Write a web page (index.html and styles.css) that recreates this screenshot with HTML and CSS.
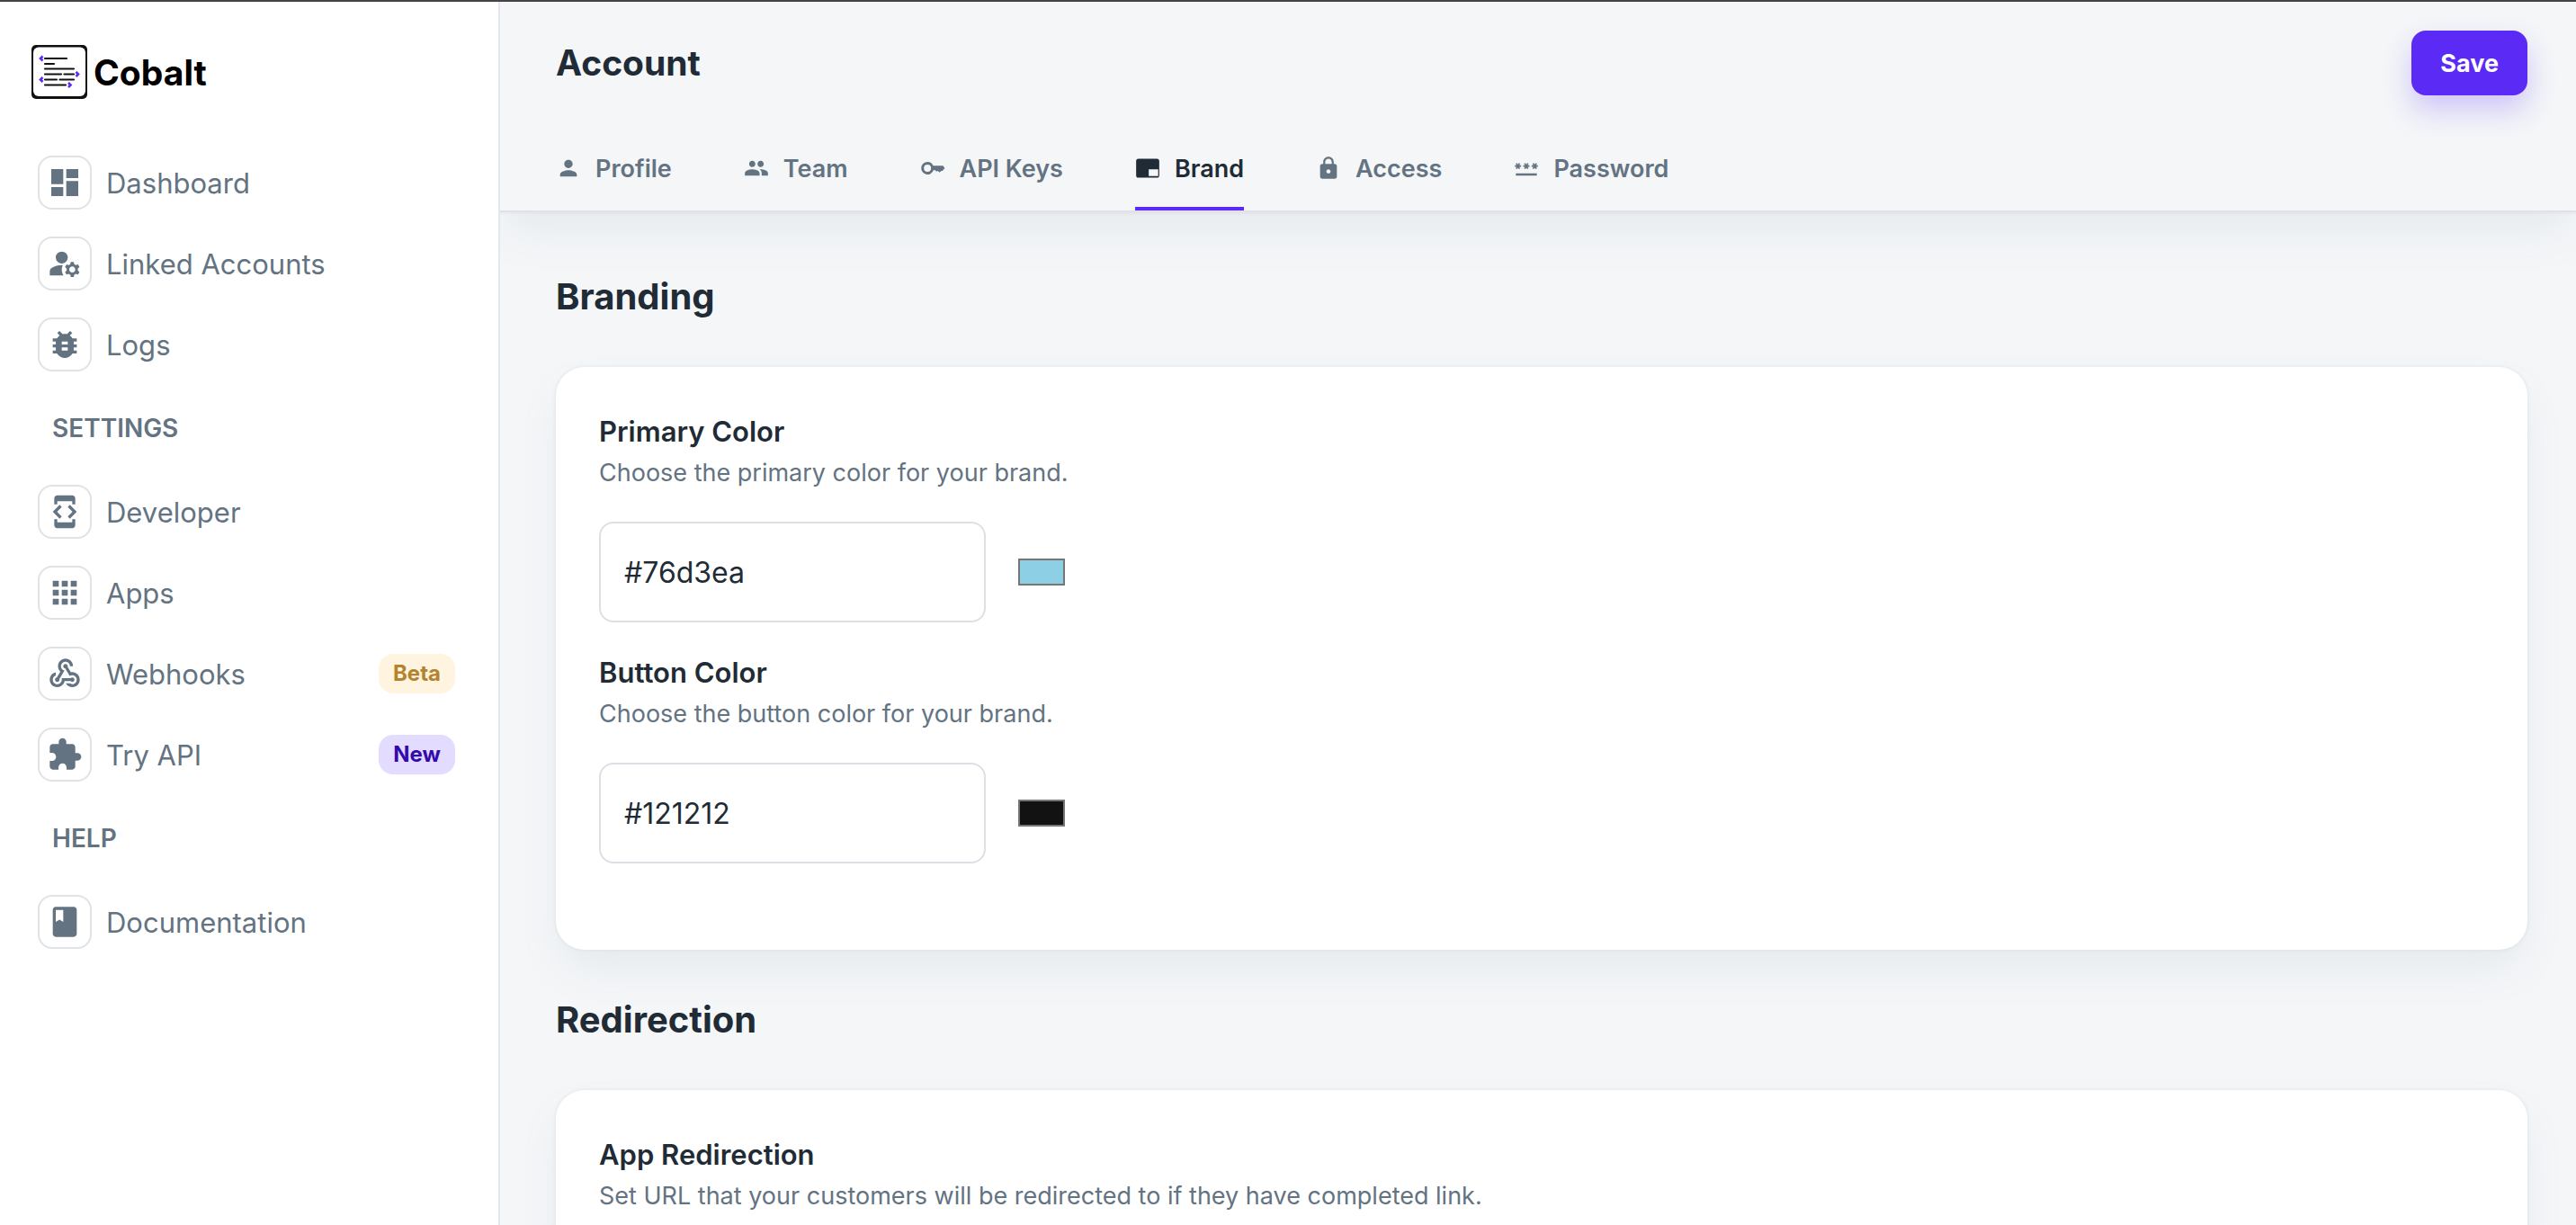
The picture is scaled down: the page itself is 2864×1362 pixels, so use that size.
FILE: index.html
```
<!DOCTYPE html>
<html lang="en">
<head>
<meta charset="utf-8">
<meta name="viewport" content="width=device-width, initial-scale=1">
<title>Cobalt</title>
<link rel="stylesheet" href="styles.css">
</head>
<body class="app">
<aside class="sidebar">
  <a class="logo" href="#">
    <svg class="logo-mark" viewBox="0 0 64 60" fill="none">
      <rect x="1" y="0" width="62" height="60" rx="5" fill="#111"/>
      <rect x="3" y="2.500" width="58" height="54.500" rx="6" fill="#fff"/>
      <path d="M16 15h24M16 21h10M16 26.500h32M16 32.500h18M37.500 32.500h10.500M16 38.500h13M32.500 38.500h15.500M16 44.500h23" stroke="#111" stroke-width="2.200" stroke-linecap="round"/>
      <path d="M13.500 12.500l-2.500 2.500 2.500 2.500M13.500 36l-2.500 2.500 2.500 2.500M50.500 30l2.500 2.500-2.500 2.500M42 42l2.500 2.500-2.500 2.500" stroke="#5b2bf5" stroke-width="2.600"/>
    </svg>
    <span>Cobalt</span>
  </a>
  <nav class="nav">
    <a class="nav-item" href="#"><span class="nav-icon"><svg viewBox="0 0 24 24"><path d="M3 13h8V3H3v10zm0 8h8v-6H3v6zm10 0h8V11h-8v10zm0-18v6h8V3h-8z"/></svg></span><span class="nav-text">Dashboard</span></a>
    <a class="nav-item" href="#"><span class="nav-icon"><svg viewBox="0 0 24 24"><circle cx="10" cy="8" r="4"/><path d="M10.670 13.020C10.450 13.010 10.230 13 10 13c-2.420 0-4.680.67-6.610 1.820-.88.520-1.390 1.500-1.390 2.530V20h9.260c-.79-1.130-1.260-2.510-1.260-4 0-1.070.25-2.070.67-2.980zM20.750 16c0-.22-.03-.42-.06-.63l1.140-1.010-1-1.730-1.450.49c-.32-.27-.68-.48-1.080-.63L18 11h-2l-.3 1.490c-.4.150-.76.360-1.080.63l-1.450-.49-1 1.730 1.140 1.010c-.03.210-.06.410-.06.630s.03.420.06.630l-1.140 1.010 1 1.730 1.450-.49c.32.270.68.480 1.080.63L16 21h2l.3-1.490c.4-.15.760-.36 1.080-.63l1.450.49 1-1.730-1.140-1.010c.03-.21.060-.41.060-.63zM17 18c-1.100 0-2-.9-2-2s.9-2 2-2 2 .9 2 2-.9 2-2 2z"/></svg></span><span class="nav-text">Linked Accounts</span></a>
    <a class="nav-item" href="#"><span class="nav-icon"><svg viewBox="0 0 24 24"><path d="M20 8h-2.810c-.45-.78-1.070-1.450-1.820-1.960L17 4.410 15.590 3l-2.170 2.170C12.960 5.060 12.490 5 12 5s-.96.060-1.410.17L8.410 3 7 4.410l1.620 1.630C7.880 6.550 7.260 7.220 6.810 8H4v2h2.090c-.05.33-.09.66-.09 1v1H4v2h2v1c0 .34.04.67.09 1H4v2h2.810c1.040 1.790 2.970 3 5.190 3s4.150-1.210 5.190-3H20v-2h-2.090c.05-.33.090-.66.090-1v-1h2v-2h-2v-1c0-.34-.04-.67-.09-1H20V8zm-6 8h-4v-2h4v2zm0-4h-4v-2h4v2z"/></svg></span><span class="nav-text">Logs</span></a>
    <h2 class="nav-heading">SETTINGS</h2>
    <a class="nav-item" href="#"><span class="nav-icon"><svg viewBox="0 0 24 24"><path d="M7 5h10v2h2V3c0-1.100-.9-1.990-2-1.990L7 1c-1.100 0-2 .9-2 2v4h2V5zm8.410 11.590L20 12l-4.590-4.590L14 8.830 17.170 12 14 15.170l1.410 1.420zM10 15.170L6.830 12 10 8.830 8.590 7.410 4 12l4.590 4.590L10 15.170zM17 19H7v-2H5v4c0 1.100.9 2 2 2h10c1.100 0 2-.9 2-2v-4h-2v2z"/></svg></span><span class="nav-text">Developer</span></a>
    <a class="nav-item" href="#"><span class="nav-icon"><svg viewBox="0 0 24 24"><path d="M4 8h4V4H4v4zm6 12h4v-4h-4v4zm-6 0h4v-4H4v4zm0-6h4v-4H4v4zm6 0h4v-4h-4v4zm6-10v4h4V4h-4zm-6 4h4V4h-4v4zm6 6h4v-4h-4v4zm0 6h4v-4h-4v4z"/></svg></span><span class="nav-text">Apps</span></a>
    <a class="nav-item" href="#"><span class="nav-icon"><svg viewBox="0 0 24 24"><path d="M10 15h5.880c.27-.31.670-.5 1.120-.5.830 0 1.500.67 1.500 1.500s-.67 1.500-1.500 1.500c-.44 0-.84-.19-1.120-.5H11.900c-.46 2.280-2.480 4-4.900 4-2.760 0-5-2.240-5-5 0-2.420 1.720-4.440 4-4.900v2.070c-1.160.41-2 1.530-2 2.830 0 1.650 1.350 3 3 3s3-1.350 3-3v-1zm2.500-11c1.650 0 3 1.350 3 3h2c0-2.760-2.240-5-5-5s-5 2.240-5 5c0 1.430.6 2.710 1.550 3.620l-2.350 3.900c-.68.140-1.200.75-1.200 1.480 0 .83.670 1.500 1.500 1.500s1.500-.67 1.500-1.500c0-.16-.02-.31-.07-.45l3.380-5.630C10.490 9.610 9.500 8.420 9.500 7c0-1.650 1.350-3 3-3zm4.500 9c-.64 0-1.230.2-1.720.54l-3.050-5.070C11.530 8.350 11 7.740 11 7c0-.83.670-1.500 1.500-1.500S14 6.170 14 7c0 .15-.02.29-.06.43l2.190 3.650c.28-.05.57-.08.870-.08 2.760 0 5 2.240 5 5s-2.240 5-5 5c-1.850 0-3.470-1.010-4.330-2.500h2.670c.48.320 1.050.5 1.660.5 1.650 0 3-1.350 3-3s-1.350-3-3-3z"/></svg></span><span class="nav-text">Webhooks</span><span class="badge badge-beta">Beta</span></a>
    <a class="nav-item" href="#"><span class="nav-icon"><svg viewBox="0 0 24 24"><path d="M20.500 11H19V7c0-1.100-.9-2-2-2h-4V3.500C13 2.120 11.880 1 10.500 1S8 2.120 8 3.500V5H4c-1.100 0-1.990.9-1.990 2v3.800H3.500c1.490 0 2.700 1.210 2.700 2.700s-1.210 2.700-2.700 2.700H2V20c0 1.100.9 2 2 2h3.800v-1.500c0-1.490 1.210-2.700 2.700-2.700 1.490 0 2.700 1.210 2.700 2.700V22H17c1.100 0 2-.9 2-2v-4h1.500c1.380 0 2.500-1.120 2.500-2.500S21.880 11 20.500 11z"/></svg></span><span class="nav-text">Try API</span><span class="badge badge-new">New</span></a>
    <h2 class="nav-heading">HELP</h2>
    <a class="nav-item" href="#"><span class="nav-icon"><svg viewBox="0 0 24 24"><path d="M18 2H6c-1.100 0-2 .9-2 2v16c0 1.100.9 2 2 2h12c1.100 0 2-.9 2-2V4c0-1.100-.9-2-2-2zM6 4h5v8l-2.500-1.500L6 12V4z"/></svg></span><span class="nav-text">Documentation</span></a>
  </nav>
</aside>
<main class="main">
  <header class="header">
    <div class="header-row">
      <h1 class="title">Account</h1>
      <button class="save" type="button">Save</button>
    </div>
    <nav class="tabs">
      <a class="tab" href="#"><svg viewBox="0 0 24 24"><path d="M12 12c2.210 0 4-1.790 4-4s-1.790-4-4-4-4 1.790-4 4 1.790 4 4 4zm0 2c-2.670 0-8 1.340-8 4v2h16v-2c0-2.660-5.330-4-8-4z"/></svg>Profile</a>
      <a class="tab" href="#"><svg viewBox="0 0 24 24"><path d="M16 11c1.660 0 2.990-1.340 2.990-3S17.660 5 16 5s-3 1.340-3 3 1.340 3 3 3zm-8 0c1.660 0 2.990-1.340 2.990-3S9.660 5 8 5 5 6.340 5 8s1.340 3 3 3zm0 2c-2.330 0-7 1.170-7 3.500V19h14v-2.500c0-2.330-4.670-3.500-7-3.500zm8 0c-.29 0-.62.02-.97.05 1.160.84 1.970 1.970 1.970 3.450V19h6v-2.500c0-2.330-4.670-3.500-7-3.500z"/></svg>Team</a>
      <a class="tab" href="#"><svg viewBox="0 0 24 24"><path fill-rule="evenodd" d="M7 6a6 6 0 1 0 5.700 8H14.500l1 1.200L17 14.500l1.500 1.500 1.700-1.500h1L23.500 12l-1.700-2.300H12.500A6 6 0 0 0 7 6zm0 2.600a3.400 3.400 0 1 1 0 6.800 3.400 3.400 0 0 1 0-6.800z"/></svg>API Keys</a>
      <a class="tab tab-active" href="#" aria-current="page"><svg viewBox="0 0 24 24"><path d="M21 3H3c-1.100 0-2 .9-2 2v14c0 1.100.9 2 2 2h18c1.100 0 2-.9 2-2V5c0-1.100-.9-2-2-2zm1 16.500h-9V13h9z"/></svg>Brand</a>
      <a class="tab" href="#"><svg viewBox="0 0 24 24"><path d="M18 8h-1V6c0-2.760-2.240-5-5-5S7 3.240 7 6v2H6c-1.100 0-2 .9-2 2v10c0 1.100.9 2 2 2h12c1.100 0 2-.9 2-2V10c0-1.100-.9-2-2-2zm-6 9c-1.100 0-2-.9-2-2s.9-2 2-2 2 .9 2 2-.9 2-2 2zm3.100-9H8.900V6c0-1.710 1.390-3.100 3.100-3.100 1.710 0 3.100 1.390 3.100 3.100v2z"/></svg>Access</a>
      <a class="tab" href="#"><svg viewBox="0 0 24 24"><path d="M2 17h20v2H2v-2zm1.150-4.050L4 11.470l.85 1.480 1.300-.75-.85-1.480H7v-1.500H5.300l.85-1.470L4.850 7 4 8.470 3.150 7l-1.300.75.850 1.470H1v1.500h1.700l-.85 1.480 1.300.75zm6.700-.75l1.300.75.850-1.480.85 1.480 1.300-.75-.85-1.480H15v-1.500h-1.700l.85-1.470-1.300-.75L12 8.470 11.150 7l-1.300.75.850 1.470H9v1.500h1.700l-.85 1.480zM23 9.220h-1.700l.85-1.470-1.300-.75L20 8.470 19.150 7l-1.300.75.850 1.470H17v1.500h1.700l-.85 1.480 1.300.75.850-1.480.85 1.480 1.300-.75-.85-1.480H23v-1.500z"/></svg>Password</a>
    </nav>
  </header>
  <div class="content">
    <h2 class="section-title">Branding</h2>
    <section class="card">
      <div class="field">
        <label class="label" for="primary">Primary Color</label>
        <p class="hint">Choose the primary color for your brand.</p>
        <div class="field-row">
          <input class="input" id="primary" type="text" value="#76d3ea">
          <input class="swatch" type="color" value="#8dd0e6" aria-label="Pick primary color">
        </div>
      </div>
      <div class="field">
        <label class="label" for="button">Button Color</label>
        <p class="hint">Choose the button color for your brand.</p>
        <div class="field-row">
          <input class="input" id="button" type="text" value="#121212">
          <input class="swatch" type="color" value="#121212" aria-label="Pick button color">
        </div>
      </div>
    </section>
    <h2 class="section-title">Redirection</h2>
    <section class="card">
      <h3 class="label">App Redirection</h3>
      <p class="hint">Set URL that your customers will be redirected to if they have completed link.</p>
    </section>
  </div>
</main>
</body>
</html>
```

FILE: styles.css
```
* { box-sizing: border-box; }
.app {
  margin: 0;
  height: 100vh;
  display: flex;
  overflow: hidden;
  border-top: 2px solid #444447;
  background: #f4f6f8;
  color: #212b36;
  font-family: Inter, "Liberation Sans", sans-serif;
}
h1, h2, h3, p { margin: 0; }
a { color: inherit; text-decoration: none; }
svg { fill: currentColor; flex: none; }

.sidebar {
  flex: none;
  width: 556px;
  background: #fff;
  border-right: 2px solid #e4e8ec;
  padding: 48px 48px 0 34px;
}
.logo {
  display: flex;
  align-items: center;
  gap: 6px;
  height: 60px;
  color: #000;
  font-size: 39px;
  font-weight: 700;
}
.logo-mark { width: 64px; height: 60px; fill: none; }
.nav { display: flex; flex-direction: column; gap: 30px; margin-top: 63px; padding-left: 8px; }
.nav-item { display: flex; align-items: center; gap: 16px; height: 60px; color: #637381; font-size: 31px; }
.nav-icon {
  display: flex;
  align-items: center;
  justify-content: center;
  width: 60px;
  height: 60px;
  border: 2px solid #dfe3e8;
  border-radius: 16px;
}
.nav-icon svg { width: 40px; height: 40px; }
.nav-text { flex: 1; }
.nav-heading { padding-left: 16px; font-size: 28px; line-height: 66px; font-weight: 600; color: #637381; }
.badge { padding: 0 16px; border-radius: 16px; font-size: 24px; line-height: 44px; font-weight: 700; }
.badge-beta { background: #fff4e0; color: #b3832d; }
.badge-new { background: #e3dcff; color: #330bac; }

.main { flex: 1; min-width: 0; overflow: hidden; }
.header {
  border-bottom: 2px solid #dfe3e8;
  padding: 32px 54px 0 62px;
  box-shadow: 0 0 4px rgba(145, 158, 171, 0.2), 0 24px 48px -8px rgba(145, 158, 171, 0.14);
}
.header-row { display: flex; align-items: center; justify-content: space-between; }
.title { font-size: 39px; line-height: 72px; font-weight: 700; }
.save {
  height: 72px;
  padding: 0 32px;
  border: 0;
  border-radius: 16px;
  background: #5b2bf5;
  color: #fff;
  font: 700 27px Inter, "Liberation Sans", sans-serif;
  box-shadow: 0 16px 32px rgba(91, 43, 245, 0.24);
}
.tabs { display: flex; gap: 80px; margin-top: 38px; }
.tab {
  display: flex;
  align-items: center;
  gap: 16px;
  height: 90px;
  border-bottom: 4px solid transparent;
  color: #637381;
  font-size: 27px;
  font-weight: 600;
}
.tab svg { width: 28px; height: 28px; }
.tab-active { color: #212b36; border-color: #5b2bf5; }

.content { padding: 52px 54px 48px 62px; }
.section-title { font-size: 40px; line-height: 84px; font-weight: 700; }
.card {
  margin: 36px 0;
  padding: 48px;
  border-radius: 32px;
  background: #fff;
  box-shadow: 0 0 4px rgba(145, 158, 171, 0.2), 0 24px 48px -8px rgba(145, 158, 171, 0.14);
}
.field { margin-bottom: 48px; }
.field:first-child { margin-bottom: 32px; }
.label { display: block; font-size: 31px; line-height: 48px; font-weight: 600; }
.hint { font-size: 27px; line-height: 44px; color: #637381; }
.field-row { display: flex; align-items: center; gap: 36px; margin-top: 32px; }
.input {
  width: 430px;
  height: 112px;
  padding: 0 26px;
  border: 2px solid #dce0e4;
  border-radius: 16px;
  background: #fff;
  color: #212b36;
  font: 400 32px Inter, "Liberation Sans", sans-serif;
}
.swatch { width: 52px; height: 30px; padding: 0; border: 2px solid #767676; background: none; }
.swatch::-webkit-color-swatch-wrapper { padding: 0; }
.swatch::-webkit-color-swatch { border: 0; }
```
